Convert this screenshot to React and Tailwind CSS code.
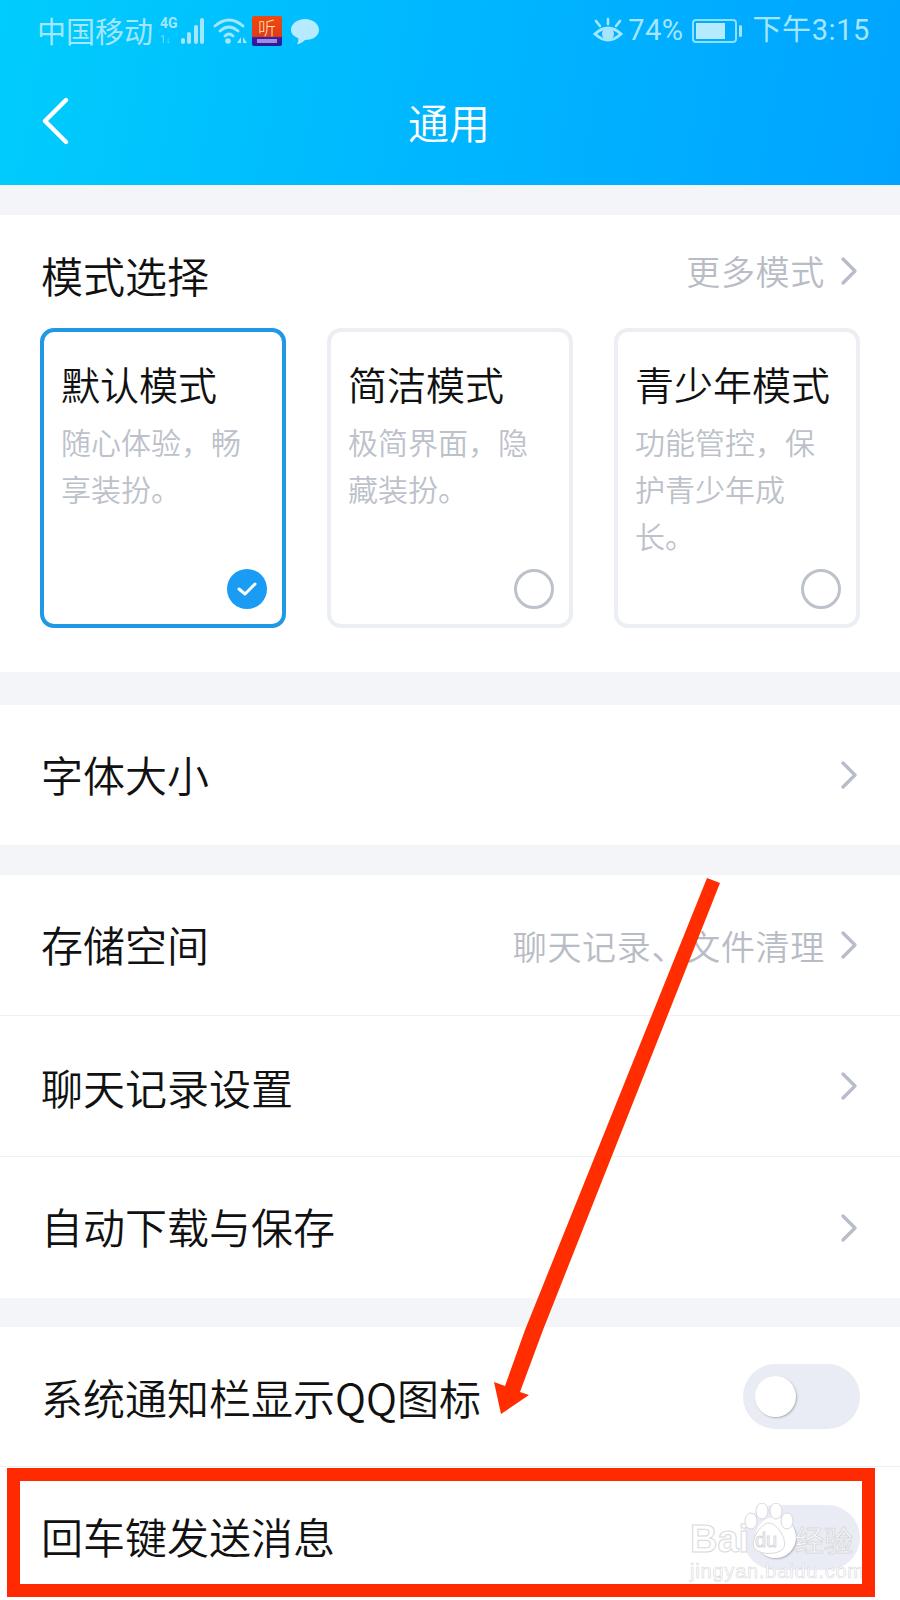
const Chevron = ({ className = '' }) => (
    <svg width="20" height="30" viewBox="0 0 20 30" fill="none" className={className}>
        <path d="M5 3 L17 15 L5 27" stroke="#b8bec9" strokeWidth="3.4" strokeLinecap="round" strokeLinejoin="round" />
    </svg>
);

const StatusBar = () => (
    <div className="h-[62px] pl-[37px] pr-[30px] flex items-center justify-between text-[#a5e6ff] text-[29px]">
        <div className="flex items-center">
            <span className="w-[116px] whitespace-nowrap">中国移动</span>
            <svg width="46" height="30" viewBox="0 0 46 30" className="ml-[5px]">
                <text x="2" y="12" fontSize="14" fontWeight="700" fill="#a5e6ff" fontFamily="Roboto">4G</text>
                <text x="2" y="27" fontSize="10" fill="#7fdcff" fontFamily="Roboto">1↓</text>
                <rect x="23" y="22" width="4" height="6" rx="2" fill="#a5e6ff" />
                <rect x="29" y="16" width="4" height="12" rx="2" fill="#a5e6ff" />
                <rect x="36" y="9" width="4" height="19" rx="2" fill="#a5e6ff" />
                <rect x="42" y="2" width="4" height="26" rx="2" fill="#a5e6ff" />
            </svg>
            <svg width="36" height="30" viewBox="0 0 36 30" className="ml-[8px]">
                <path d="M3 10 Q17 -2 31 10 M8 15 Q17 7 26 15 M13 20 Q17 16 21 20" fill="none" stroke="#a5e6ff" strokeWidth="2.8" strokeLinecap="round" />
                <circle cx="16" cy="25" r="2.8" fill="#a5e6ff" />
                <path d="M25 27 L29 21 V27 Z M31 21 L35 27 H31 Z" fill="#a5e6ff" />
            </svg>
            <div className="ml-[4px] w-[30px] h-[30px] rounded-[2px] bg-[linear-gradient(#ef4a10_0%,#e03a18_68%,#3a1ca8_72%,#2a1a90_100%)] flex flex-col items-center">
                <span className="text-[#ffe2b0] text-[18px] leading-[22px] font-light">听</span>
                <div className="mt-[1px] w-[20px] h-[4px] bg-[#9d8ce0]" />
            </div>
            <svg width="30" height="30" viewBox="0 0 30 30" className="ml-[8px]">
                <path d="M15 3 C23 3 29 8 29 14 C29 20 23 24 15 24 C13 26 10 28 7 28 C8 26 9 24 8 22 C3 20 1 17 1 14 C1 8 7 3 15 3 Z" fill="#b5eaff" />
            </svg>
        </div>
        <div className="flex items-center">
            <svg width="32" height="30" viewBox="0 0 32 30">
                <path d="M3 18 Q16 6 29 18 Q16 30 3 18 Z" fill="none" stroke="#a5e6ff" strokeWidth="3" />
                <circle cx="16" cy="18" r="6" fill="#a5e6ff" />
                <path d="M16 8 V3 M8 10 L4 5 M24 10 L28 5" stroke="#a5e6ff" strokeWidth="2.6" strokeLinecap="round" />
            </svg>
            <span className="ml-[4px] font-['Roboto'] tracking-[0.5px]">74%</span>
            <div className="ml-[9px] w-[45px] h-[24px] rounded-[4px] border-2 border-[#8fdfff] p-[2px]">
                <div className="h-full w-[76%] bg-[#b5eaff]" />
            </div>
            <div className="ml-[2px] w-[3px] h-[12px] rounded-full bg-[#a5e6ff]" />
            <span className="ml-[10px] font-['Roboto',_'Noto_Sans_CJK_SC'] tracking-[0.6px]">下午3:15</span>
        </div>
    </div>
);

const ModeCard = ({ title, lines, active }) => (
    <div className={`relative w-[246px] h-[300px] rounded-[14px] border-[4px] pl-[17px] pt-[26px] ${active ? 'border-[#1f98e6]' : 'border-[#ebeff4]'}`}>
        <div className="text-[39px] leading-[50px] text-[#111111] whitespace-nowrap font-[350]">{title}</div>
        <div className="mt-[10px] text-[30px] leading-[47px] text-[#bcc1ca] font-[350]">
            {lines.map((line) => <div key={line} className="whitespace-nowrap">{line}</div>)}
        </div>
        {active ? (
            <div className="absolute right-[15px] bottom-[15px] w-[40px] h-[40px] rounded-full bg-[#1a9cf5] flex items-center justify-center">
                <svg width="22" height="18" viewBox="0 0 22 18" fill="none">
                    <path d="M3 9 L9 14 L19 4" stroke="#ffffff" strokeWidth="3" strokeLinecap="round" strokeLinejoin="round" />
                </svg>
            </div>
        ) : (
            <div className="absolute right-[15px] bottom-[15px] w-[40px] h-[40px] rounded-full border-[3px] border-[#bcc1ca]" />
        )}
    </div>
);

const Row = ({ label, hint, chevron = true, toggle, height, divider, textClass = '' }) => (
    <div className={`flex items-center justify-between pl-[41px] ${divider ? 'border-b border-[#eef0f3]' : ''}`} style={{ height }}>
        <span className={`text-[42px] text-[#111111] whitespace-nowrap font-[350] ${textClass}`}>{label}</span>
        <div className="flex items-center pr-[42px]">
            {hint && <span className="text-[34px] text-[#b8bcc5] mr-[13px] whitespace-nowrap tracking-[0.7px] font-[350]">{hint}</span>}
            {chevron && <Chevron />}
            {toggle && (
                <div className="-mr-[2px] w-[117px] h-[65px] rounded-full bg-[#e9ecf4] flex items-center pl-[12px]">
                    <div className="w-[41px] h-[41px] rounded-full bg-white shadow-[1px_1px_2px_rgba(0,0,0,0.25)]" />
                </div>
            )}
        </div>
    </div>
);

const Watermark = () => (
    <div className="absolute left-[688px] top-[1503px] w-[170px] h-[80px] text-white [-webkit-text-stroke:1px_#d9d9dd] font-['Liberation_Sans']">
        <span className="absolute left-[2px] top-[16px] text-[38px] leading-[40px] font-bold">Bai</span>
        <svg width="52" height="56" viewBox="0 0 52 56" className="absolute left-[55px] top-[0px]">
            <g fill="#ffffff" stroke="#d9d9dd" strokeWidth="1">
                <ellipse cx="8" cy="18" rx="6" ry="8" />
                <ellipse cx="19" cy="8" rx="6" ry="8" />
                <ellipse cx="33" cy="8" rx="6" ry="8" />
                <ellipse cx="44" cy="18" rx="6" ry="8" />
                <path d="M26 20 C34 20 46 38 40 46 C34 52 18 52 12 46 C6 38 18 20 26 20 Z" />
            </g>
            <text x="12" y="44" fontSize="20" fontFamily="Liberation Sans" fill="#ffffff" stroke="#d9d9dd">du</text>
        </svg>
        <span className="absolute left-[107px] top-[20px] text-[29px] leading-[32px] font-['Noto_Sans_CJK_SC'] whitespace-nowrap">经验</span>
        <span className="absolute left-[2px] top-[57px] text-[20px] leading-[22px] tracking-[0.8px] whitespace-nowrap [-webkit-text-stroke:0.6px_#d9d9dd]">jingyan.baidu.com</span>
    </div>
);

export default function App() {
    return (
        <div className="relative w-[900px] h-[1600px] overflow-hidden bg-[#f3f5f9] font-['Noto_Sans_CJK_SC','Noto_Sans',sans-serif]">
            <header className="h-[185px] bg-[linear-gradient(100deg,#00cdfc_0%,#00b8ff_45%,#00a4ff_100%)]">
                <StatusBar />
                <div className="relative h-[123px] flex items-center justify-center">
                    <svg width="30" height="50" viewBox="0 0 30 50" fill="none" className="absolute left-[41px] top-[35px]">
                        <path d="M25 3 L4 24 L25 45" stroke="#ffffff" strokeWidth="4.4" strokeLinecap="round" strokeLinejoin="round" />
                    </svg>
                    <span className="text-[41px] text-white -mt-[4px] -ml-[2px] font-[350]">通用</span>
                </div>
            </header>

            <section className="mt-[30px] h-[457px] bg-white">
                <div className="h-[113px] flex items-center justify-between pl-[41px]">
                    <span className="text-[42px] text-[#111111] mt-[5px] font-[350]">模式选择</span>
                    <div className="flex items-center -mt-[2px] pr-[42px]">
                        <span className="text-[34px] text-[#b8bcc5] mr-[13px] tracking-[0.7px] font-[350]">更多模式</span>
                        <Chevron />
                    </div>
                </div>
                <div className="flex pl-[40px] gap-[41px]">
                    <ModeCard title="默认模式" lines={['随心体验，畅', '享装扮。']} active />
                    <ModeCard title="简洁模式" lines={['极简界面，隐', '藏装扮。']} />
                    <ModeCard title="青少年模式" lines={['功能管控，保', '护青少年成', '长。']} />
                </div>
            </section>

            <section className="mt-[33px] bg-white">
                <Row label="字体大小" height="140px" textClass="-mt-[4px]" />
            </section>

            <section className="mt-[30px] bg-white">
                <Row label="存储空间" hint="聊天记录、文件清理" height="141px" divider textClass="-mt-[4px]" />
                <Row label="聊天记录设置" height="141px" divider />
                <Row label="自动下载与保存" height="141px" textClass="-mt-[4px]" />
            </section>

            <section className="mt-[29px] bg-white">
                <Row label="系统通知栏显示QQ图标" chevron={false} toggle height="140px" divider />
                <Row label="回车键发送消息" chevron={false} toggle height="140px" textClass="-mt-[4px]" />
            </section>

            {/* annotation drawn over the screenshot */}
            <svg width="900" height="1600" viewBox="0 0 900 1600" className="absolute left-0 top-0 pointer-events-none">
                <polygon points="707,878 720,883 543,1330 520,1392 529,1395 501,1414 494,1382 505,1386 525,1330" fill="#ff2d00" />
            </svg>
            <Watermark />
            <div className="absolute left-[7px] top-[1468px] w-[868px] h-[129px] border-[13px] border-[#ff2a00] pointer-events-none" />
        </div>
    );
}
